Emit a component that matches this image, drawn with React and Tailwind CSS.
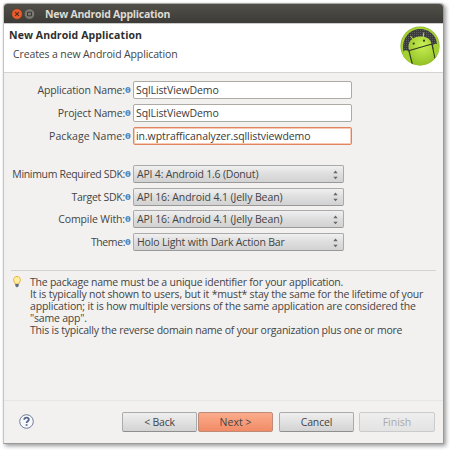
import React from 'react';

function Info() {
  return (
    <svg className="mr-[2px] h-[6px] w-[6px] shrink-0" viewBox="0 0 6 6">
      <ellipse cx="3" cy="3" rx="2.6" ry="2.9" fill="#4e8bc0" />
      <path d="M3 1.100v1M3 2.700v2.200" stroke="#f4f8fc" strokeWidth="1" />
    </svg>
  );
}

function Row({ label, track, children }) {
  return (
    <div className="flex h-[18px] items-center">
      <div className={`w-[121px] text-right ${track}`}>{label}</div>
      <Info />
      {children}
    </div>
  );
}

function Field({ value, active, track }) {
  return (
    <div
      className={`flex h-[18px] w-[219px] items-center rounded-[2px] border bg-white pl-[2px] text-[#3a3a3a] ${track} ${
        active ? 'border-[#e08560] shadow-[inset_0_0_0_1px_#f8c9b5]' : 'border-[#aeaba5]'
      }`}
    >
      {value}
    </div>
  );
}

function Combo({ value, track }) {
  return (
    <div className="flex h-[18px] w-[211px] items-center justify-between rounded-[2px] border border-[#aaa] border-b-[#999] bg-linear-to-b from-[#f0f0f0] via-[#dedede] to-[#d2d2d2] pl-[3px] pr-[5px]">
      <span className={track}>{value}</span>
      <svg className="mt-px h-[10px] w-[5px]" viewBox="0 0 5 10">
        <path d="M.3 3.2 2.5.5l2.2 2.7zM.3 6.8 2.5 9.3l2.2-2.5z" fill="#666" />
      </svg>
    </div>
  );
}

function Button({ children, look }) {
  return (
    <div className={`flex h-[20px] items-center justify-center rounded-[2px] border ${look}`}>{children}</div>
  );
}

function AndroidLogo() {
  return (
    <svg className="h-[40px] w-[40px]" viewBox="0 0 40 40">
      <defs>
        <radialGradient id="body" cx=".5" cy=".3" r=".75">
          <stop offset="0" stopColor="#c9ef55" />
          <stop offset="1" stopColor="#8dbd20" />
        </radialGradient>
        <pattern id="mesh" width="2" height="2" patternUnits="userSpaceOnUse">
          <path d="M0 0h2v2H0z" fill="#3b3b3c" />
          <path d="M0 0h1v1H0z" fill="#5c5c5e" />
        </pattern>
        <clipPath id="disc"><circle cx="20" cy="20" r="19.5" /></clipPath>
      </defs>
      <circle cx="20" cy="20" r="19.6" fill="#8fb33c" />
      <circle cx="20" cy="20" r="18.8" fill="#a5d42c" />
      <path d="M3.500 26C1 13 9 3 20 3s19 9 16.500 20z" fill="url(#mesh)" />
      <g clipPath="url(#disc)">
        <path d="M9 24C7 16 12 11 19 10.500 25 10 30.500 12 31.500 18L37 40H12z" fill="url(#body)" />
        <path d="M3 27c0-3 5-4 6 0l4 13L3 32zM33 20c0-3 5-3 6 0v12l-3 3z" fill="#a3d032" />
        <path d="M8.500 24.700 32 18M9 25l3.500 14M32 18.500l3 14" stroke="#303822" strokeWidth="1.100" fill="none" />
        <path d="m13.500 14-3-4M23.300 11l.4-4.500" stroke="#a7d52f" strokeWidth="1.100" />
        <circle cx="13.700" cy="17.600" r="1.100" fill="#344017" />
        <circle cx="24" cy="14.700" r="1.100" fill="#344017" />
      </g>
    </svg>
  );
}

export default function App() {
  return (
    <div className="h-[450px] w-[450px] overflow-hidden bg-white pl-[3px] pt-[3px] font-['Open_Sans','Noto_Sans',sans-serif] text-[10.5px] leading-[12px] whitespace-nowrap text-[#444]">
      <div className="flex h-[441px] w-[441px] flex-col rounded-t-[4px] border-x border-b border-[#c4c4c2] border-r-[#999] border-b-[#999] bg-[#f2f1f0] shadow-[2px_2px_4px_0px_rgba(0,0,0,0.4)]">
        <div className="flex h-[20px] shrink-0 items-center rounded-t-[4px] border-t border-[#aaa9a5] bg-linear-to-b from-[#504f49] to-[#3c3b37] pl-[7px] font-bold text-[#dfdbd2]">
          <svg className="mr-[10px] h-[12px] w-[24px]" viewBox="0 0 24 12">
            <circle cx="6" cy="6" r="5.400" fill="#e85b2c" stroke="#35332e" strokeWidth=".5" />
            <path d="m4.200 4.200 3.600 3.600m0-3.600L4.200 7.800" stroke="#51301f" strokeWidth="1.200" />
            <circle cx="18.500" cy="6" r="5.200" fill="#7b7972" stroke="#393832" strokeWidth=".5" />
            <path d="M16.500 4.200h4v3.600h-4z" fill="none" stroke="#393832" />
          </svg>
          <span className="tracking-[-0.25px]">New Android Application</span>
        </div>
        <div className="flex h-[50px] shrink-0 justify-between border-t border-b border-t-[#ccc] border-b-[#d5d4d2] bg-white pr-[3px]">
          <div className="pl-[5px] pt-[5px]">
            <div className="font-bold tracking-[0.09px] text-[#2e2e2e]"><span>New Android Application</span></div>
            <div className="mt-[7px] pl-[4px] tracking-[-0.12px]"><span>Creates a new Android Application</span></div>
          </div>
          <div className="pt-[2px]"><AndroidLogo /></div>
        </div>
        <div className="flex flex-col gap-[5px] pt-[8px]">
          <Row label="Application Name:" track="tracking-[-0.12px]"><Field value="SqlListViewDemo" track="tracking-[-0.1px]" /></Row>
          <Row label="Project Name:" track="tracking-[-0.15px]"><Field value="SqlListViewDemo" track="tracking-[-0.1px]" /></Row>
          <Row label="Package Name:" track="tracking-[0.08px]"><Field value="in.wptrafficanalyzer.sqllistviewdemo" track="tracking-[-0.08px]" active /></Row>
        </div>
        <div className="flex flex-col gap-[4.700px] pt-[20px]">
          <Row label="Minimum Required SDK:" track="tracking-[-0.33px]"><Combo value="API 4: Android 1.6 (Donut)" track="tracking-[-0.19px]" /></Row>
          <Row label="Target SDK:" track="tracking-[-0.27px]"><Combo value="API 16: Android 4.1 (Jelly Bean)" track="tracking-[-0.1px]" /></Row>
          <Row label="Compile With:" track="tracking-[-0.12px]"><Combo value="API 16: Android 4.1 (Jelly Bean)" track="tracking-[-0.1px]" /></Row>
          <Row label="Theme:" track="tracking-[-0.4px]"><Combo value="Holo Light with Dark Action Bar" track="tracking-[-0.16px]" /></Row>
        </div>
        <div className="mx-[7px] mt-[19px] flex border-t border-[#d4d3d1] pt-[5px]">
          <svg className="ml-[2px] mr-[9px] h-[12px] w-[8px] shrink-0" viewBox="0 0 8 12">
            <path d="M4 .5C1.900.5.600 2 .600 3.800c0 1.700 1.300 2.300 1.600 4.200h3.600c.3-1.900 1.600-2.500 1.600-4.200C7.400 2 6.100.5 4 .5z" fill="#fff0a0" stroke="#e7ad3c" />
            <path d="M2.300 8h3.400v2L4 11.500 2.300 10z" fill="#5f6f82" />
          </svg>
          <div>
            <p className="tracking-[-0.23px]">The package name must be a unique identifier for your application.</p>
            <p className="tracking-[-0.185px]">It is typically not shown to users, but it *must* stay the same for the lifetime of your</p>
            <p className="tracking-[-0.15px]">application; it is how multiple versions of the same application are considered the</p>
            <p className="tracking-[-0.2px]">"same app".</p>
            <p className="tracking-[-0.22px]">This is typically the reverse domain name of your organization plus one or more</p>
          </div>
        </div>
        <div className="mt-auto flex h-[43px] shrink-0 items-start border-t border-[#e7e6e4] pt-[11px]">
          <svg className="ml-[15px] mr-[88px] mt-[2px] h-[15px] w-[15px]" viewBox="0 0 15 15">
            <circle cx="7.500" cy="7.500" r="6.800" fill="#f8f8fa" stroke="#6e7b98" />
            <path d="M5.200 5.700C5.300 2.900 9.800 3 9.800 5.600 9.800 7.200 7.600 7.200 7.600 9" fill="none" stroke="#53658b" strokeWidth="1.800" />
            <path d="M6.700 10.200h1.800v1.600H6.700z" fill="#53658b" />
          </svg>
          <Button look="w-[75px] border-[#aaa] border-b-[#8f8f8f] bg-linear-to-b from-[#efefef] to-[#d3d3d3] tracking-[-0.2px]"><span>&lt; Back</span></Button>
          <Button look="ml-px w-[75px] border-[#bd8b77] bg-linear-to-b from-[#fbac8c] to-[#f18b66]"><span>Next &gt;</span></Button>
          <Button look="ml-[6px] w-[75px] border-[#aaa] border-b-[#8f8f8f] bg-linear-to-b from-[#efefef] to-[#d3d3d3] tracking-[-0.15px]"><span>Cancel</span></Button>
          <Button look="ml-[5px] w-[76px] border-[#cbcbcb] bg-linear-to-b from-[#eeeeee] to-[#e3e3e3] text-[#a9a9a9]"><span>Finish</span></Button>
        </div>
      </div>
    </div>
  );
}
